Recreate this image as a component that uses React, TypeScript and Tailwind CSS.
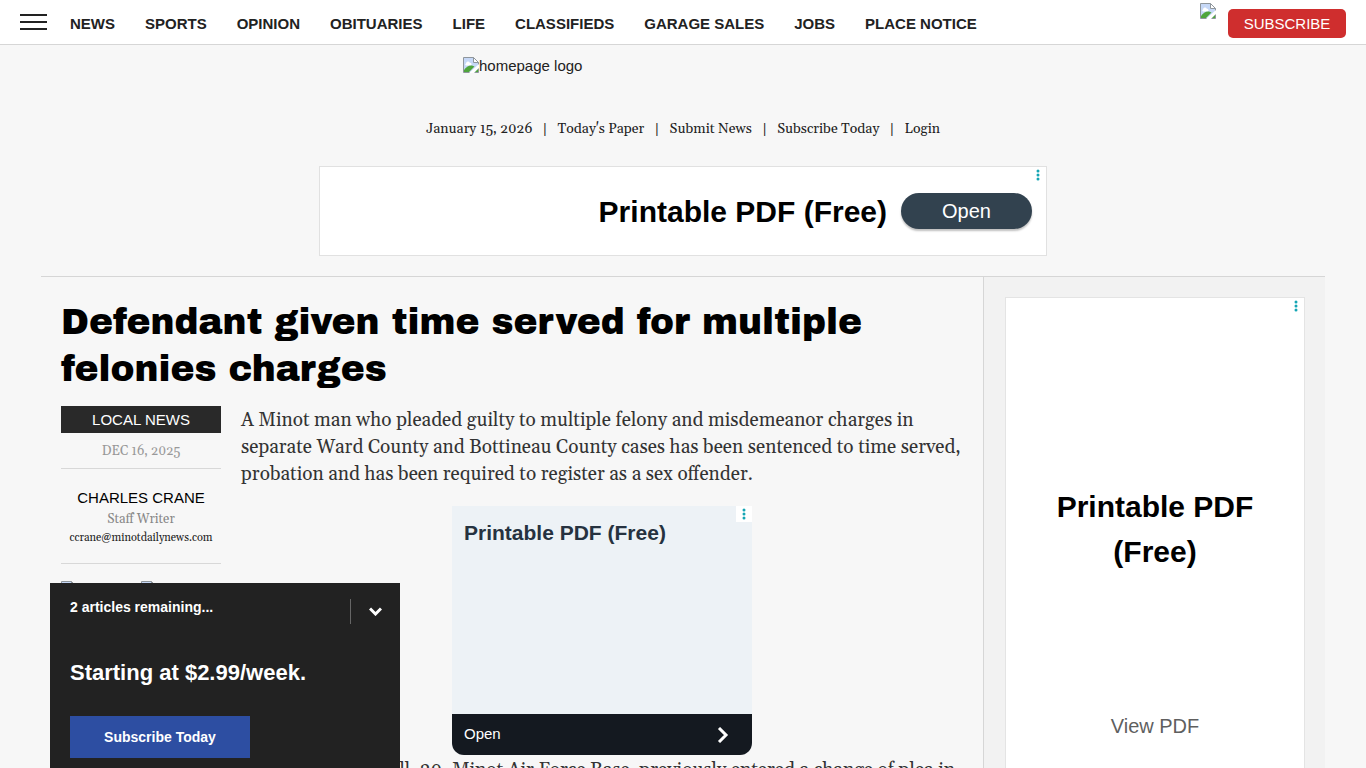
import { useState } from 'react'
import type { ReactNode } from 'react'

const NAV_LINKS = [
  'NEWS', 'SPORTS', 'OPINION', 'OBITUARIES', 'LIFE',
  'CLASSIFIEDS', 'GARAGE SALES', 'JOBS', 'PLACE NOTICE',
]

const TOP_LINKS = ["Today's Paper", 'Submit News', 'Subscribe Today', 'Login']

const SERIF = "font-[Georgia,Gelasio,'Liberation_Serif',serif]"

function MissingImage() {
  return (
    <svg width="16" height="16" viewBox="0 0 16 16" className="shrink-0" aria-hidden="true">
      <path d="M.5.5h10l5 5v10H.5z" fill="#c6d8f7" />
      <path d="M3 6.500a2 2 0 0 1 3.800-.8A1.600 1.600 0 0 1 8 8.500H3.500A1 1 0 0 1 3 6.500z" fill="#fff" />
      <path d="M1 15V13c2-3 5-5 8-4.500l2.500 1L6 15z" fill="#4fa53c" />
      <path d="M.5 15.500V.5h10l5 5v10z" fill="none" stroke="#8f969c" />
      <path d="M6 16 16 7v4l-5 5z" fill="#fff" />
      <path d="M12 15 15 12v3z" fill="#4fa53c" />
      <path d="M10.500.5v5h5z" fill="#fff" stroke="#8f969c" />
    </svg>
  )
}

function AdMenu() {
  return (
    <button aria-label="Ad options" className="absolute top-0 right-0 w-4 h-4 flex items-center justify-center bg-white">
      <svg width="4" height="12" viewBox="0 0 4 12" fill="#14a5b4">
        <circle cx="2" cy="2" r="1.500" />
        <circle cx="2" cy="6" r="1.500" />
        <circle cx="2" cy="10" r="1.500" />
      </svg>
    </button>
  )
}

function Header() {
  return (
    <header className="flex items-center h-[45px] px-5 bg-white border-b border-[#d6d6d6]">
      <button aria-label="Menu" className="flex flex-col gap-[5px] w-[27px] mr-[23px]">
        <span className="h-0.5 bg-[#222]" />
        <span className="h-0.5 bg-[#222]" />
        <span className="h-0.5 bg-[#222]" />
      </button>
      <nav className="flex flex-1 gap-[30px] pt-1 text-[15px] font-bold whitespace-nowrap">
        {NAV_LINKS.map((label) => (
          <a key={label} href="#">{label}</a>
        ))}
      </nav>
      <div className="self-start mt-[3px] mr-3">
        <MissingImage />
      </div>
      <a href="#" className="w-[118px] h-[29px] mt-0.5 pt-px rounded-[5px] bg-[#cf2e2e] text-center text-white text-[15px] leading-7">
        SUBSCRIBE
      </a>
    </header>
  )
}

function Masthead() {
  return (
    <div className="flex flex-col items-center">
      <div className="flex w-[440px] h-[72px] pt-3 text-[15px] leading-[18px]">
        <MissingImage />
        <span>homepage logo</span>
      </div>
      <div className={`${SERIF} flex text-sm leading-6`}>
        <span>January 15, 2026</span>
        {TOP_LINKS.map((label) => (
          <span key={label}>
            <span className="px-2.5">|</span>
            <a href="#">{label}</a>
          </span>
        ))}
      </div>
      <div className="relative flex items-center justify-end w-[728px] h-[90px] mt-[25px] pr-3.5 bg-white border border-[#e1e1e1]">
        <span className="text-[30px] font-bold text-black">Printable PDF (Free)</span>
        <button className="w-[131px] h-9 ml-3.5 rounded-full bg-[#32424f] text-white text-xl shadow-[0_2px_2px_rgba(0,0,0,0.25)]">
          Open
        </button>
        <AdMenu />
      </div>
    </div>
  )
}

function Byline() {
  return (
    <aside className={`${SERIF} w-40 shrink-0 text-center text-[13px]`}>
      <a href="#" className="block h-[27px] bg-[#292929] text-white text-[15px] leading-7 font-['Liberation_Sans',Arial,sans-serif]">
        LOCAL NEWS
      </a>
      <p className="h-9 pt-2 leading-5 text-[#999] border-b border-[#d8d8d8]">DEC 16, 2025</p>
      <div className="h-[95px] pt-[18px] border-b border-[#d8d8d8]">
        <p className="text-[15px] leading-[22px] text-black font-['Liberation_Sans',Arial,sans-serif]">CHARLES CRANE</p>
        <p className="leading-5 text-[#888]">Staff Writer</p>
        <a href="#" className="block text-[11px] leading-[18px]">ccrane@minotdailynews.com</a>
      </div>
      <div className="flex gap-16 pt-[17px]">
        <MissingImage />
        <MissingImage />
      </div>
    </aside>
  )
}

function InlineAd() {
  return (
    <div className="relative flex flex-col w-[300px] h-[249px] mx-auto rounded-b-xl overflow-hidden bg-[#edf2f6]">
      <p className="flex-1 px-3 pt-3 text-[21px] leading-[30px] font-bold text-[#263240]">Printable PDF (Free)</p>
      <button className="flex items-center justify-between h-[41px] pl-3 pr-[22px] bg-[#141920] text-white text-[15px]">
        Open
        <svg width="14" height="16" viewBox="0 0 14 16" fill="none" stroke="#fff" strokeWidth="3">
          <path d="M3 1l7 7-7 7" />
        </svg>
      </button>
      <AdMenu />
    </div>
  )
}

function Sidebar() {
  return (
    <aside className="w-[342px] shrink-0 pt-5 pl-[21px] border-l border-[#d6d6d6] bg-[#f2f2f2]">
      <div className="relative flex flex-col items-center w-[300px] h-[600px] pt-[186px] bg-white border border-[#e4e4e4]">
        <p className="w-[220px] text-center text-[30px] leading-[45px] font-bold text-black">Printable PDF (Free)</p>
        <button className="mt-[136px] text-xl leading-8 text-[#5f5f5f]">View PDF</button>
        <AdMenu />
      </div>
    </aside>
  )
}

function Paragraph({ children }: { children: ReactNode }) {
  return <p className={`${SERIF} text-[19px] leading-[27px] text-[#333]`}>{children}</p>
}

function SubscribePanel() {
  const [open, setOpen] = useState(true)

  return (
    <section className="fixed bottom-0 left-[50px] w-[350px] px-5 pt-4 pb-2.5 bg-[#222] text-white font-bold">
      <div className="flex justify-between">
        <p className="text-sm leading-4">2 articles remaining...</p>
        <button
          aria-label={open ? 'Collapse' : 'Expand'}
          onClick={() => setOpen(!open)}
          className="flex items-center h-[25px] -mr-3 pl-[18px] pr-2.5 border-l border-[#666]"
        >
          <svg width="13" height="9" viewBox="0 0 13 9" fill="none" stroke="#fff" strokeWidth="3">
            <path d="M1 1.500l5.500 5.500L12 1.500" />
          </svg>
        </button>
      </div>
      {open && (
        <>
          <p className="mt-[33px] text-[22px] leading-8">Starting at $2.99/week.</p>
          <a href="#" className="block w-[180px] mt-[27px] text-center text-sm leading-[42px] bg-[#2d4ea2]">
            Subscribe Today
          </a>
        </>
      )}
    </section>
  )
}

export default function App() {
  return (
    <div className="h-screen overflow-hidden bg-[#f7f7f7] text-[#222] font-['Liberation_Sans',Arial,sans-serif]">
      <Header />
      <Masthead />
      <main className="flex mt-5 mx-[41px] border-t border-[#d6d6d6]">
        <article className="flex-1 px-5 pt-[22px]">
          <h1 className="text-[36px] leading-[47px] font-normal text-black font-['Archivo_Black','Arial_Black',Inter,sans-serif]">
            Defendant given time served for multiple felonies charges
          </h1>
          <div className="flex gap-5 mt-[13px]">
            <Byline />
            <div className="flex-1 pt-px">
              <Paragraph>
                A Minot man who pleaded guilty to multiple felony and misdemeanor charges in separate Ward County and
                Bottineau County cases has been sentenced to time served, probation and has been required to register
                as a sex offender.
              </Paragraph>
              <div className="pt-[18px] pb-0.5">
                <InlineAd />
              </div>
              <Paragraph>
                Christopher W. Hall, 20, Minot Air Force Base, previously entered a change of plea in
              </Paragraph>
            </div>
          </div>
        </article>
        <Sidebar />
      </main>
      <SubscribePanel />
    </div>
  )
}
